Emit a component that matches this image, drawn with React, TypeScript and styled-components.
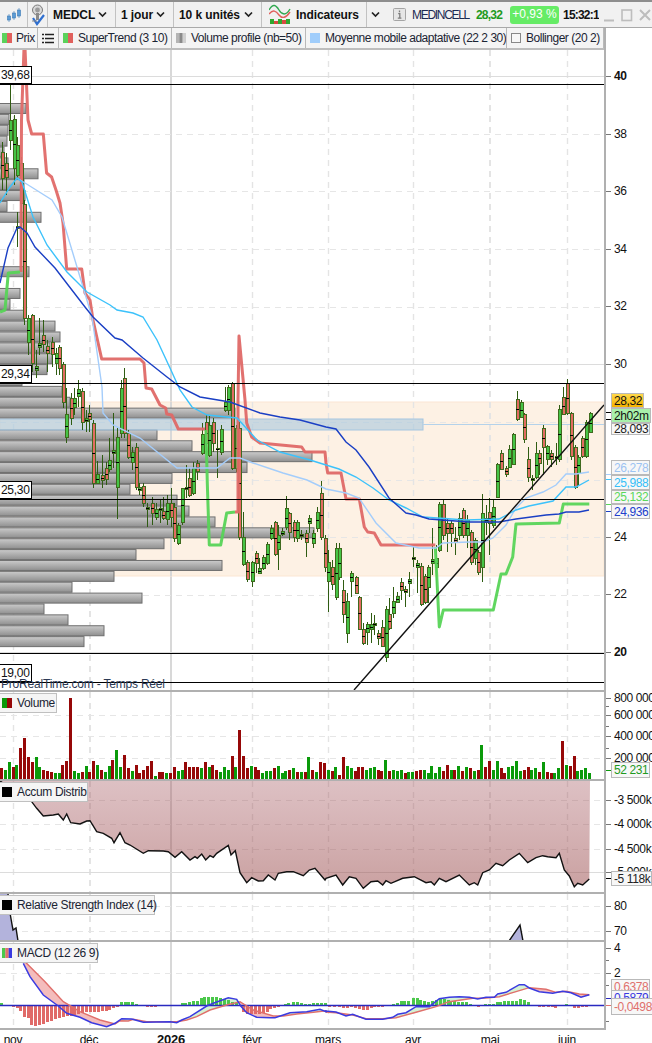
import React from 'react';
import styled, { createGlobalStyle } from 'styled-components';

const GlobalStyle = createGlobalStyle`
  html, body { margin: 0; padding: 0; background: #fff; overflow: hidden; }
  body { font-family: "Liberation Sans", Arial, sans-serif; }
`;

type Pt = [number, number];

// zoom-space points (3x crops) back to page pixels
const fromCrop = (p: Pt[], ox: number, oy: number): Pt[] => p.map(([x, y]) => [ox + x / 3, oy + y / 3]);
const line = (p: Pt[]) => p.map(([x, y]) => `${x.toFixed(1)},${y.toFixed(1)}`).join(' ');
const interp = (p: Pt[], x: number) => {
  for (let i = 1; i < p.length; i++) {
    if (x <= p[i][0]) {
      const t = (x - p[i - 1][0]) / (p[i][0] - p[i - 1][0] || 1);
      return p[i - 1][1] + (p[i][1] - p[i - 1][1]) * t;
    }
  }
  return p[p.length - 1][1];
};

const PLOT_W = 604;
const MONTHS = [13.5, 90, 252.5, 328.5, 413.5, 490, 567.5];
const YEAR_X = 171;

// x, high, body top, body bottom, low, up
const CANDLES: [number, number, number, number, number, number][] = [
  [2,142,152,178,190,0],[6,153,163,177,195,0],[10,84,120,140,150,1],[14,115,119,168,185,1],[17,137,145,175,178,1],[17,212,226,228,247,1],
  [21,157,163,203,250,0],[24,200,204,318,325,0],[28,315,318,342,355,1],[32,314,315,363,372,0],[36,350,366,370,378,1],[39,318,343,347,355,1],
  [43,320,335,344,352,0],[47,340,346,353,372,0],[52,337,342,354,367,0],[56,348,353,363,375,1],[59,345,347,368,375,0],[63,362,364,402,408,0],
  [66,388,414,437,443,1],[71,393,398,418,425,0],[74,388,398,407,415,1],[78,380,389,396,407,1],[82,388,391,422,430,0],[86,410,418,421,432,1],
  [89,405,413,419,432,0],[93,420,423,483,488,0],[97,461,474,483,484,1],[102,455,475,480,488,0],[106,462,468,479,485,0],[109,438,460,469,472,1],
  [113,413,450,453,468,1],[117,428,437,487,519,1],[121,380,388,433,438,1],[124,368,378,433,438,0],[128,430,433,457,459,0],[132,447,452,462,470,1],
  [136,443,447,487,490,0],[139,483,487,490,495,1],[143,483,486,503,507,0],[147,503,507,509,527,1],[152,497,503,513,525,0],[156,503,509,517,520,1],
  [160,500,508,510,523,1],[163,497,511,518,520,0],[167,495,503,519,525,1],[171,488,503,517,527,0],[174,503,507,538,542,0],[178,523,525,543,545,1],
  [182,488,488,522,525,1],[186,465,487,489,498,1],[189,468,478,495,497,0],[193,462,468,493,495,1],[197,460,463,471,480,0],[202,423,434,453,455,1],
  [206,415,422,443,455,0],[209,415,425,455,457,1],[213,418,422,443,452,0],[217,430,448,449,478,1],[221,425,429,452,455,1],[225,387,402,410,412,1],
  [228,385,387,410,415,1],[232,382,383,468,470,0],[236,425,428,468,472,1],[239,422,428,537,540,0],[243,512,537,564,566,1],[247,560,562,579,582,0],
  [252,561,562,581,587,1],[256,551,553,563,573,0],[259,558,568,573,574,1],[263,555,557,568,570,1],[267,542,544,563,565,1],[271,525,528,538,540,1],
  [275,521,522,554,556,0],[278,525,535,549,570,1],[282,528,531,534,536,1],[286,496,508,527,530,1],[289,512,513,532,540,0],[294,520,522,537,542,0],
  [297,520,522,538,542,1],[301,530,534,536,540,1],[306,530,533,542,557,0],[309,515,518,523,533,1],[313,530,533,543,548,1],[317,507,512,528,532,1],
  [321,481,493,537,540,0],[325,535,538,567,572,0],[328,550,562,581,612,1],[332,560,567,584,590,0],[336,543,548,597,600,1],[339,543,548,577,580,1],
  [343,580,590,614,623,0],[347,593,601,633,643,1],[351,571,573,581,597,1],[356,576,577,593,594,0],[359,596,597,629,630,0],[363,623,629,643,645,0],
  [367,622,624,632,645,1],[371,613,624,629,643,1],[374,615,623,625,635,0],[378,630,633,638,645,0],[382,620,627,646,647,0],[386,606,609,657,662,1],
  [389,598,614,628,630,0],[393,587,601,613,618,1],[397,592,596,602,603,1],[401,578,582,590,600,0],[405,586,589,592,607,0],[409,572,579,583,597,1],
  [413,547,557,559,567,1],[417,560,563,567,593,1],[421,563,566,604,606,0],[425,574,576,602,604,0],[428,565,567,587,603,1],[432,528,559,563,575,1],
  [436,545,558,567,590,1],[439,502,504,550,552,1],[443,500,504,535,540,0],[447,518,523,533,552,0],[451,520,523,533,547,0],[455,527,538,542,555,0],
  [459,513,518,535,540,1],[463,508,510,535,538,0],[467,515,520,535,548,1],[471,530,532,562,565,0],[475,538,540,558,565,1],[478,550,552,572,575,0],
  [482,494,513,567,582,1],[486,505,518,522,535,1],[489,498,512,523,555,0],[493,500,507,525,528,1],[497,463,464,497,498,1],[501,450,453,469,470,0],
  [506,466,468,474,477,0],[509,445,449,467,468,1],[513,433,434,464,465,1],[517,391,399,419,421,0],[521,400,402,417,418,1],[524,413,414,439,443,0],
  [528,447,459,477,482,0],[532,475,478,480,490,0],[536,442,453,477,479,1],[539,450,453,463,475,0],[543,425,428,447,475,0],[547,445,446,459,465,1],
  [551,450,453,459,467,0],[556,443,456,458,465,1],[559,405,409,459,462,1],[563,387,397,414,415,0],[567,379,383,413,415,0],[571,412,413,456,460,0],
  [575,445,447,487,489,0],[578,455,457,473,485,1],[582,436,438,456,458,0],[586,420,422,456,458,1],[590,412,413,432,433,1],
];

// volume profile, 50 rows from the top, index 29 is the point of control
const PROFILE = [
  26,9,8,7,4,8,38,24,25,7,41,0,0,0,0,29,0,20,10,24,55,60,50,52,47,22,62,70,235,423,157,192,312,247,172,130,177,189,215,314,164,136,222,114,72,142,44,68,104,84,
];

const ST_RED: Pt[] = [[21,272],[21.5,120],[24,48],[25,48],[28,120],[31.7,134],[43.3,134],[46.6,173],[51.6,177],[56,190],[60,203],[63,223],[66.7,269],[81.7,269],[85,293],[90,300],[93,320],[101.7,359],[140,359],[144,363],[146,388],[151.7,389],[160,405],[165.7,408],[166.7,414],[171.7,415],[178.3,429],[205,429]];
const ST_RED2: Pt[] = [[235,512],[238,512],[238,400],[239,336],[245,400],[246.7,423],[251.7,437],[260,443],[301.7,447],[305,452],[325,452],[326,463],[327.7,473],[341,473],[346,499],[359.3,499],[364.3,527],[367.7,532],[374.3,533],[381,545],[435.3,545]];
const ST_GREEN: Pt[] = [[0,312],[5,310],[8.3,273],[20,272]];
const ST_GREEN2: Pt[] = [[206,430],[207.3,483],[209.3,545],[220.7,545],[226.7,513],[235,512]];
const ST_GREEN3: Pt[] = [[435.3,547],[439.3,627],[443.3,610],[493.3,610],[501,574],[506,574],[512.7,557],[516,524],[559.3,523],[563.3,504],[589.3,504]];

const MA_DARK: Pt[] = [[0,283],[8,248],[17,228],[20,227],[27,233],[35,247],[55,268],[85,307],[93,317],[115,338],[122,340],[143,358],[167,377],[180,387],[200,397],[230,402],[260,413],[280,417],[300,420],[326,427],[336,429],[346,442],[356,450],[369,467],[389,498],[406,513],[416,515],[429,519],[469,522],[499,522],[516,519],[546,515],[559,514],[566,512],[579,512],[589,510]];
const MA_CYAN: Pt[] = [[0,203],[10,187],[17,178],[22,182],[33,217],[47,245],[67,272],[87,292],[110,305],[117,310],[133,313],[143,317],[157,340],[170,368],[180,390],[192,407],[207,415],[237,418],[257,440],[280,452],[310,460],[326,465],[339,469],[356,477],[373,488],[389,500],[406,508],[423,517],[466,520],[499,519],[516,510],[529,506],[553,501],[566,487],[576,487],[589,480]];
const MA_LIGHT: Pt[] = [[17,178],[33,188],[52,200],[62,217],[80,277],[92,317],[102,387],[103,413],[113,425],[140,438],[177,468],[217,468],[230,458],[240,458],[253,463],[283,473],[307,480],[326,489],[346,493],[359,498],[376,523],[396,543],[419,548],[436,548],[443,543],[469,542],[483,542],[493,538],[506,525],[516,508],[526,498],[543,492],[556,485],[566,474],[576,474],[589,472]];

const VOLUMES = [
  -12,10,18,-13,15,-32,-42,-23,-18,23,13,-10,-9,-8,7,7,-15,-19,-82,9,7,-8,14,-8,-19,15,-10,8,14,-20,30,13,-25,-12,9,-15,-7,-10,-14,-19,
  4,-8,-8,7,-7,-13,9,10,-18,-13,-13,-13,12,-18,13,-15,-10,8,13,10,-24,13,-50,-24,-12,14,-13,-10,7,9,9,-12,14,7,9,-10,12,-8,8,-8,23,-10,8,-18,-17,
  10,-9,13,-5,-23,14,12,-9,-13,-13,10,12,13,-10,-9,20,-9,10,9,10,-7,8,8,-9,-10,10,7,14,7,13,-9,-15,10,-10,14,-9,13,-12,9,-10,
  35,-13,-19,10,19,-12,-7,13,14,19,9,-10,-13,10,12,-8,18,-8,-7,7,12,-39,15,-14,-24,9,10,12,7,
];

const AD_CURVE: Pt[] = [
  [0, 781], [30, 801],
  ...fromCrop([[95,335],[110,355],[130,378],[160,375],[175,372],[190,390],[200,372],[212,398],[240,402],[260,393],[270,392],[290,425],[310,430],[335,445],[342,458],[360,428],[375,458],[390,465],[430,490],[445,482],[490,483],[505,485],[525,502],[545,485],[570,510],[585,500],[592,505],[605,492],[617,510],[630,497],[640,502],[650,490],[685,466],[693,495],[706,482],[720,548],[740,578],[755,563],[775,573],[790,572],[805,555],[825,570],[835,550],[860,545],[880,545],[910,557],[928,540],[945,535],[975,570]], 0, 690),
  ...fromCrop([[0,565],[30,555],[50,585],[70,560],[90,565],[112,595],[135,575],[155,573],[170,585],[180,572],[195,580],[230,565],[265,560],[300,578],[315,575],[325,585],[340,565],[360,575],[400,555],[430,585],[445,578],[455,585],[470,548],[490,540],[510,520],[530,527],[550,510],[580,490],[605,518],[630,503],[650,497],[665,500],[690,503],[700,490],[715,540],[730,558],[745,590],[755,580],[770,585],[790,567]], 326, 690),
];

const MACD_BLUE: Pt[] = [
  ...fromCrop([[70,250],[90,290],[130,345],[175,378],[200,400],[240,412],[275,428],[320,440],[345,430],[365,416],[395,417],[430,427],[510,425],[530,428],[545,420],[570,410],[620,378],[640,370],[685,353],[710,358],[722,378],[740,398],[770,412],[810,413],[825,413],[850,405],[870,398],[920,395],[960,388],[978,395]], 0, 880),
  ...fromCrop([[0,393],[30,396],[60,408],[80,403],[120,418],[170,418],[200,412],[215,403],[240,398],[270,380],[310,380],[340,356],[370,352],[400,350],[430,352],[455,357],[480,352],[505,352],[515,342],[540,337],[580,314],[595,314],[610,324],[640,335],[680,340],[710,334],[735,338],[765,352],[790,344]], 326, 880),
];
const MACD_RED: Pt[] = [
  ...fromCrop([[75,245],[135,305],[190,365],[240,395],[300,420],[345,432],[360,422],[385,423],[400,418],[440,425],[510,425],[530,425],[560,420],[590,410],[630,390],[680,375],[720,365],[760,390],[820,408],[850,408],[890,402],[940,397],[978,392]], 0, 880),
  ...fromCrop([[0,396],[30,398],[80,405],[120,416],[170,416],[210,413],[270,397],[330,380],[370,365],[440,355],[480,354],[520,350],[570,335],[610,323],[660,328],[690,337],[720,334],[760,342],[790,344]], 326, 880),
];

// histogram: [crop x, height in crop px], positive is above zero
const MACD_HIST: Pt[] = [
  ...fromCrop([[3,8],[40,-5],[50,-8],[61,-15],[72,-35],[83,-38],[94,-58],[106,-60],[117,-58],[128,-55],[140,-50],[152,-45],[164,-40],[177,-37],[188,-35],[200,-32],[212,-30],[222,-28],[235,-25],[246,-22],[258,-20],[270,-20],[282,-18],[294,-18],[305,-15],[317,-15],[328,-12],[340,-6],[352,-3],[362,10],[374,10],[385,10],[397,10],[408,5],[440,-3],[452,-3],[465,-3],[545,8],[556,8],[567,10],[579,13],[590,15],[602,22],[613,25],[625,25],[637,27],[648,25],[660,22],[672,20],[683,17],[695,12],[707,7],[718,3],[730,-20],[742,-25],[753,-25],[765,-25],[777,-25],[790,-22],[800,-20],[810,-10],[822,-7],[835,-3],[855,6],[865,7],[878,10],[890,10],[902,8],[915,6],[927,5],[940,8],[950,8],[962,8],[975,8]], 0, 0),
  ...fromCrop([[10,-3],[25,-3],[38,-3],[50,-7],[63,-6],[75,-5],[88,-8],[100,-10],[110,-12],[122,-12],[135,-8],[145,-5],[157,-5],[167,-3],[200,5],[212,8],[225,13],[235,13],[247,15],[260,22],[272,22],[283,17],[295,15],[305,12],[318,15],[330,18],[342,22],[353,20],[365,18],[373,15],[385,13],[397,12],[408,12],[420,10],[433,5],[457,-3],[478,5],[490,5],[500,5],[512,12],[523,12],[535,13],[547,14],[558,15],[570,15],[582,20],[593,17],[605,10],[640,-3],[652,-3],[665,-3],[677,-3],[688,-7],[721,6],[745,-6],[757,-6],[767,-4],[780,-4]], 326, 0),
];

const Screen = styled.div`
  width: 652px;
  height: 1043px;
  overflow: hidden;
  display: flex;
  flex-direction: column;
  background: #fff;
  color: #111;
  font-size: 12px;
`;

const TopBar = styled.div`
  height: 25px;
  flex: none;
  display: flex;
  align-items: stretch;
  background: #f1f1f1;
  border-top: 2px solid #8e8e8e;
  border-bottom: 1px solid #a9a9a9;
`;

const ToolCell = styled.div<{ $w: number }>`
  width: ${p => p.$w}px;
  flex: none;
  box-sizing: border-box;
  display: flex;
  align-items: center;
  justify-content: space-between;
  padding: 0 8px 0 5px;
  border-right: 1px solid #c2c2c2;
  font-weight: 700;
  font-size: 12px;
  letter-spacing: -0.1px;
  color: #111;
  white-space: nowrap;
`;

const IconCell = styled(ToolCell)`
  justify-content: center;
  padding: 0;
`;

const IndicatorCell = styled(ToolCell)`
  justify-content: flex-start;
  gap: 5px;
  padding: 0 0 0 7px;
`;

const ArrowCell = styled.div`
  width: 24px;
  flex: none;
  display: flex;
  align-items: center;
  padding-left: 4px;
  box-sizing: border-box;
`;

const Quote = styled.div`
  flex: 1;
  display: flex;
  align-items: center;
  padding-left: 2px;
`;

const Name = styled.span`
  margin-left: 6px;
  font-size: 12px;
  letter-spacing: -1.3px;
  color: #1c2a52;
`;

const LastPrice = styled.span`
  margin-left: 7px;
  font-size: 12px;
  font-weight: 700;
  letter-spacing: -0.8px;
  color: #1f9a1f;
`;

const ChangePill = styled.span`
  margin-left: 8px;
  width: 49px;
  height: 18px;
  border-radius: 3px;
  background: #66ec66;
  color: #fff;
  font-size: 12px;
  line-height: 17px;
  text-align: center;
  flex: none;
`;

const Clock = styled.span`
  margin-left: 4px;
  font-size: 12px;
  font-weight: 700;
  letter-spacing: -0.8px;
  width: 36px;
  overflow: hidden;
  flex: none;
`;

const WindowButtons = styled.div`
  margin-left: 5px;
  display: flex;
  flex: none;
`;

const Pane = styled.div<{ $h: number }>`
  height: ${p => p.$h}px;
  flex: none;
  display: flex;
`;

const Plot = styled.div`
  width: ${PLOT_W}px;
  flex: none;
  box-sizing: border-box;
  position: relative;
  overflow: hidden;
  display: flex;
  flex-direction: column;
  border-bottom: 2px solid #b0b0b0;
`;

const PlotSvg = styled.svg`
  display: block;
  width: ${PLOT_W}px;
  flex: 1;
  min-height: 0;
`;

const Axis = styled.div`
  flex: 1;
  position: relative;
  overflow: hidden;
  border-left: 2px solid #b0b0b0;
`;

const AxisSvg = styled.svg`
  display: block;
  width: 100%;
  height: 100%;
`;

const AxisText = styled.text<{ $bold?: boolean }>`
  font-size: 12px;
  font-weight: ${p => (p.$bold ? 700 : 400)};
  letter-spacing: -0.4px;
  fill: #111;
  dominant-baseline: central;
`;

const ValueTag = styled.span<{ $y: number; $h?: number; $color: string; $bg?: string }>`
  position: absolute;
  left: 5px;
  top: ${p => p.$y}px;
  height: ${p => p.$h ?? 15}px;
  line-height: ${p => (p.$h ?? 15) - 1}px;
  box-sizing: border-box;
  padding: 0 1px 0 2px;
  font-size: 12px;
  letter-spacing: -0.4px;
  white-space: nowrap;
  border: 1px solid #b9b9b9;
  background: ${p => p.$bg ?? '#f7f7f7'};
  color: ${p => p.$color};
`;

const LegendBar = styled.div`
  width: ${PLOT_W}px;
  height: 22px;
  flex: none;
  box-sizing: border-box;
  display: flex;
  background: #f4f4f4;
  border-bottom: 2px solid #bdbdbd;
  color: #1b2433;
  font-size: 12px;
  letter-spacing: -0.48px;
`;

const LegendItem = styled.div<{ $w: number }>`
  width: ${p => p.$w}px;
  flex: none;
  box-sizing: border-box;
  display: flex;
  align-items: center;
  gap: 5px;
  padding-left: 4px;
  border-right: 1px solid #b9b9b9;
  white-space: nowrap;
  overflow: hidden;
`;

const FirstLegendItem = styled(LegendItem)`
  padding-left: 2px;
  gap: 4px;
`;

const ListItem = styled(LegendItem)`
  justify-content: center;
  padding: 0;
`;

const Swatch = styled.span<{ $bg: string; $border?: string }>`
  width: 10px;
  height: 10px;
  flex: none;
  box-sizing: border-box;
  background: ${p => p.$bg};
  border: ${p => (p.$border ? `1px solid ${p.$border}` : 'none')};
`;

const PaneLegend = styled.div<{ $w: number }>`
  position: absolute;
  left: -1px;
  top: 1px;
  width: ${p => p.$w}px;
  height: 20px;
  box-sizing: border-box;
  display: flex;
  align-items: center;
  gap: 5px;
  padding-left: 2px;
  background: #f5f5f5;
  border: 1px solid #c0c0c0;
  color: #1b2433;
  font-size: 12px;
  letter-spacing: -0.35px;
  white-space: nowrap;
`;

const PriceTagBox = styled.div<{ $y: number }>`
  position: absolute;
  left: -1px;
  top: ${p => p.$y}px;
  height: 18px;
  width: 33px;
  box-sizing: border-box;
  padding-left: 1px;
  background: #fff;
  border: 1px solid #000;
  font-size: 12px;
  line-height: 16px;
  letter-spacing: -0.3px;
  color: #111;
`;

const Watermark = styled.div`
  position: absolute;
  left: 1px;
  top: 649px;
  font-size: 12px;
  line-height: 14px;
  letter-spacing: -0.2px;
  color: #2c3a55;
  white-space: nowrap;
`;

const DateRow = styled.svg`
  display: block;
  width: 652px;
  flex: 1;
  min-height: 0;
`;

const DateText = styled.text<{ $bold?: boolean }>`
  font-size: ${p => (p.$bold ? 13 : 12)}px;
  font-weight: ${p => (p.$bold ? 700 : 400)};
  letter-spacing: -0.2px;
  text-anchor: middle;
  fill: #111;
`;

const CandleIcon = () => (
  <svg width="16" height="16" viewBox="0 0 16 16">
    <g fill="#5b9bd5" stroke="#3a78b5" strokeWidth="0.6">
      <path d="M3 7v8M8 4v9M13 1v10" fill="none" />
      <rect x="1.5" y="9" width="3" height="4" />
      <rect x="6.5" y="6" width="3" height="5" />
      <rect x="11.5" y="3" width="3" height="6" />
    </g>
  </svg>
);

const AlertIcon = () => (
  <svg width="14" height="22" viewBox="0 0 14 22">
    <circle cx="6.5" cy="6" r="5" fill="#d8d8d8" stroke="#7a7a7a" />
    <circle cx="6.5" cy="6" r="2.4" fill="#9a9a9a" />
    <path d="M5 9h3v7H5z" fill="#8a8a8a" />
    <path d="M2 14l4 6 7-9" fill="none" stroke="#2f6fd0" strokeWidth="2.2" />
    <path d="M1 17h5" stroke="#888" />
  </svg>
);

const Chevron = () => (
  <svg width="9" height="7" viewBox="0 0 9 7">
    <path d="M1 1.5l3.5 3.5L8 1.5" fill="none" stroke="#222" strokeWidth="1.7" />
  </svg>
);

const IndicatorIcon = () => (
  <svg width="22" height="21" viewBox="0 0 22 21">
    <path d="M0 6c4-7 7-5 10 0s7 6 11-1" fill="none" stroke="#2fa84f" strokeWidth="1.4" />
    <path d="M0 10c4-5 7-3 10 1s7 3 11-3" fill="none" stroke="#e0605c" strokeWidth="1.4" />
    <path d="M1 15h4v5H1z" fill="#2fa82f" />
    <path d="M5 17h4v3H5z" fill="#d84a40" />
    <path d="M9 15h4v5H9z" fill="#2fa82f" />
    <path d="M13 16h4v4h-4z" fill="#d84a40" />
    <path d="M17 15h4v5h-4z" fill="#2fa82f" />
  </svg>
);

const InfoIcon = () => (
  <svg width="13" height="13" viewBox="0 0 13 13">
    <rect x="0.5" y="0.5" width="12" height="12" rx="1" fill="#e6e6e6" stroke="#a5a5a5" />
    <path d="M6.5 2.6v1.6M5.2 5.6h1.6v4.4M4.8 10.2h3.6" fill="none" stroke="#7c7c7c" strokeWidth="1.3" />
  </svg>
);

const WindowIcons = () => (
  <svg width="48" height="14" viewBox="0 0 48 14">
    <path d="M0 12.5h10" stroke="#bdbdbd" strokeWidth="2" />
    <rect x="18" y="2" width="9.5" height="10.5" fill="none" stroke="#bdbdbd" strokeWidth="1.6" />
    <path d="M36 2l10 10M46 2L36 12" stroke="#bdbdbd" strokeWidth="2" />
  </svg>
);

const ListIcon = () => (
  <svg width="12" height="11" viewBox="0 0 12 11">
    <path d="M3 1.5h9M3 5.5h9M3 9.5h9M0 1.5h2M0 5.5h2M0 9.5h2" stroke="#222" strokeWidth="1.6" />
  </svg>
);

const StripeSwatch = ({ colors }: { colors: string[] }) => (
  <svg width="10" height="10" viewBox={`0 0 ${colors.length} 1`} preserveAspectRatio="none" style={{ flex: 'none' }}>
    {colors.map((c, i) => (
      <rect key={c + i} x={i} y="0" width="1.02" height="1" fill={c} />
    ))}
  </svg>
);

// labels and ticks of one price scale, y in page pixels
type Tick = { y: number; text?: string; bold?: boolean; color?: string };
const Scale = ({ top, ticks }: { top: number; ticks: Tick[] }) => (
  <AxisSvg>
    {ticks.map(t => (
      <g key={t.y}>
        <line x1="0" x2={t.text ? 5 : t.color ? 5 : 3} y1={t.y - top + 0.5} y2={t.y - top + 0.5} stroke={t.color ?? '#777'} />
        {t.text && <AxisText x="8" y={t.y - top} $bold={t.bold}>{t.text}</AxisText>}
      </g>
    ))}
  </AxisSvg>
);

// shared vertical month grid
const VGrid = ({ top, bottom }: { top: number; bottom: number }) => (
  <g>
    {MONTHS.map((x, i) => (
      <line key={x} x1={x} x2={x} y1={top} y2={bottom} stroke="#e4e4e4" strokeWidth={i === 1 || i === 5 ? 2 : 1.4} strokeDasharray="6 5" />
    ))}
    <line x1={YEAR_X} x2={YEAR_X} y1={top} y2={bottom} stroke="#d8d8d8" strokeWidth="2" />
  </g>
);

const HGrid = ({ ys, solid = [] }: { ys: number[]; solid?: number[] }) => (
  <g>
    {ys.map(y => (
      <line key={y} x1="0" x2={PLOT_W} y1={y + 0.5} y2={y + 0.5} stroke="#e6e6e6" strokeWidth="1" strokeDasharray="6 5" />
    ))}
    {solid.map(y => (
      <line key={y} x1="0" x2={PLOT_W} y1={y + 0.5} y2={y + 0.5} stroke="#dcdcdc" strokeWidth="1" />
    ))}
  </g>
);

const Candles = () => (
  <g shapeRendering="crispEdges">
    {CANDLES.map(([x, hi, top, bottom, lo, up], i) => (
      <g key={i}>
        <line x1={x + 0.5} x2={x + 0.5} y1={hi} y2={lo} stroke="#2f5c12" />
        <rect x={x - 1} y={top} width={3} height={bottom - top} fill={up ? '#46c446' : '#e26c62'} stroke="#3f6a1e" />
        <line x1={x - 1} x2={x + 2} y1={Math.round((top + bottom) / 2) + 0.5} y2={Math.round((top + bottom) / 2) + 0.5} stroke="#000" />
      </g>
    ))}
  </g>
);

const MainChart = () => (
  <PlotSvg viewBox={`0 50 ${PLOT_W} 640`} preserveAspectRatio="none">
    <defs>
      <linearGradient id="bar" x1="0" x2="0" y1="0" y2="1">
        <stop offset="0" stopColor="#cbcbcb" />
        <stop offset="1" stopColor="#8f8f8f" />
      </linearGradient>
    </defs>
    <VGrid top={50} bottom={690} />
    <HGrid ys={[134, 191, 249, 307, 422, 480, 537, 595]} solid={[76, 364, 652]} />
    <rect x="0" y="402" width={PLOT_W} height="174" fill="#fdf1e4" stroke="#fbe6d3" />
    <VGrid top={402} bottom={576} />
    <HGrid ys={[422, 480, 537]} />
    {PROFILE.map((w, i) =>
      w === 0 || i === 29 ? null : (
        <rect key={i} x="-2" y={103.5 + i * 10.88} width={w + 2} height="10" fill="url(#bar)" stroke="#6f6f6f" />
      ),
    )}
    <rect x="-2" y="419" width="425" height="11" fill="#a9c8de" fillOpacity="0.6" stroke="#a5c6e0" />
    <line x1="423" x2={PLOT_W} y1="424.5" y2="424.5" stroke="#b4d2ea" />
    <Candles />
    <g fill="none" strokeWidth="3" strokeLinejoin="round" opacity="0.95">
      <polyline points={line(ST_RED)} stroke="#e06a68" />
      <polyline points={line(ST_RED2)} stroke="#e06a68" />
      <polyline points={line(ST_GREEN)} stroke="#58d458" />
      <polyline points={line(ST_GREEN2)} stroke="#58d458" />
      <polyline points={line(ST_GREEN3)} stroke="#58d458" />
    </g>
    <g fill="none" strokeWidth="1.4">
      <polyline points={line(MA_LIGHT)} stroke="#a4cdfb" />
      <polyline points={line(MA_CYAN)} stroke="#3cc2fb" />
      <polyline points={line(MA_DARK)} stroke="#1a3fc4" />
    </g>
    <line x1="354" y1="690" x2="604" y2="405" stroke="#111" strokeWidth="1.4" />
    {[84, 383, 499, 653, 682].map(y => (
      <line key={y} x1="0" x2={PLOT_W} y1={y + 0.5} y2={y + 0.5} stroke="#000" shapeRendering="crispEdges" />
    ))}
  </PlotSvg>
);

const VolumeChart = () => (
  <PlotSvg viewBox={`0 692 ${PLOT_W} 87`} preserveAspectRatio="none">
    <VGrid top={692} bottom={780} />
    <HGrid ys={[715, 736, 758]} />
    <g shapeRendering="crispEdges">
      {VOLUMES.map((v, i) => {
        const x = i * (588 / (VOLUMES.length - 1));
        const h = Math.abs(v);
        return <rect key={i} x={x} y={780 - h} width={3} height={h} fill={v > 0 ? '#0a9a0a' : '#960808'} />;
      })}
    </g>
  </PlotSvg>
);

const AccumChart = () => {
  const area = line([[0, 781], ...AD_CURVE, [590, 781]]);
  return (
    <PlotSvg viewBox={`0 781 ${PLOT_W} 111`} preserveAspectRatio="none">
      <defs>
        <linearGradient id="ad" x1="0" x2="0" y1="0" y2="1">
          <stop offset="0" stopColor="#a65a62" stopOpacity="0.38" />
          <stop offset="1" stopColor="#994a4a" stopOpacity="0.52" />
        </linearGradient>
      </defs>
      <VGrid top={781} bottom={892} />
      <HGrid ys={[800, 824, 849]} solid={[872]} />
      <polygon points={area} fill="url(#ad)" />
      <polyline points={line(AD_CURVE)} fill="none" stroke="#111" strokeWidth="1.4" />
    </PlotSvg>
  );
};

const RsiChart = () => (
  <PlotSvg viewBox={`0 894 ${PLOT_W} 46`} preserveAspectRatio="none">
    <VGrid top={894} bottom={940} />
    <HGrid ys={[906, 931]} />
    <polygon points="0,894 8,894 10,913 13,930 16,928 18,941 0,941" fill="#b3b3dc" />
    <polyline points="8,894 10,913 13,930 16,928 18,941" fill="none" stroke="#111" strokeWidth="1.4" />
    <polygon points="509,941 520,925 523,941" fill="#b3b3dc" stroke="#111" strokeWidth="1.4" />
  </PlotSvg>
);

const MacdChart = () => {
  const zero = 1005.5;
  const slices: React.ReactNode[] = [];
  for (let x = 24; x < 590; x++) {
    const b = interp(MACD_BLUE, x);
    const r = interp(MACD_RED, x);
    slices.push(
      <rect key={x} x={x} y={Math.min(b, r)} width="1.05" height={Math.abs(b - r)} fill={b > r ? '#f4bcbc' : '#d4f2d4'} />,
    );
  }
  return (
    <PlotSvg viewBox={`0 942 ${PLOT_W} 86`} preserveAspectRatio="none">
      <VGrid top={942} bottom={1028} />
      <HGrid ys={[973]} />
      {slices}
      <g shapeRendering="crispEdges">
        {MACD_HIST.map(([x, h]) => (
          <rect key={x} x={x - 1} y={h > 0 ? zero - h : zero} width={3} height={Math.abs(h)} fill={h > 0 ? '#4bc84b' : '#e06a68'} />
        ))}
      </g>
      <line x1="0" x2={PLOT_W} y1={zero} y2={zero} stroke="#2a2ac0" strokeWidth="1.4" />
      <polyline points={line(MACD_RED)} fill="none" stroke="#e0706c" strokeWidth="1.4" />
      <polyline points={line(MACD_BLUE)} fill="none" stroke="#3a3ae0" strokeWidth="1.5" />
    </PlotSvg>
  );
};

const PRICE_TICKS: Tick[] = [
  ...[40, 38, 36, 34, 32, 30, 24, 22, 20].map(v => ({
    y: Math.round(76 + (40 - v) * 28.8),
    text: String(v),
    bold: v === 40 || v === 20,
  })),
  { y: 412, color: '#000' },
  { y: 419, color: '#000' },
  { y: 474, color: '#a4cdfb' },
  { y: 479, color: '#3cc2fb' },
  { y: 504, color: '#58d458' },
  { y: 511, color: '#1a3fc4' },
];

const DATES: [number, string, boolean?][] = [
  [13, 'nov'], [89, 'déc'], [171, '2026', true], [252, 'févr'], [328, 'mars'], [413, 'avr'], [490, 'mai'], [567, 'juin'],
];

export default function App() {
  return (
    <Screen>
      <GlobalStyle />
      <TopBar>
        <IconCell $w={28}><CandleIcon /></IconCell>
        <IconCell $w={20}><AlertIcon /></IconCell>
        <ToolCell $w={68}>MEDCL<Chevron /></ToolCell>
        <ToolCell $w={58}>1 jour<Chevron /></ToolCell>
        <ToolCell $w={88}>10 k unités<Chevron /></ToolCell>
        <IndicatorCell $w={105}><IndicatorIcon />Indicateurs</IndicatorCell>
        <ArrowCell><Chevron /></ArrowCell>
        <Quote>
          <InfoIcon />
          <Name>MEDINCELL</Name>
          <LastPrice>28,32</LastPrice>
          <ChangePill>+0,93 %</ChangePill>
          <Clock>15:32:1</Clock>
          <WindowButtons><WindowIcons /></WindowButtons>
        </Quote>
      </TopBar>

      <Pane $h={664}>
        <Plot>
          <LegendBar>
            <FirstLegendItem $w={38}><StripeSwatch colors={['#5ad25a', '#e0605c']} />Prix</FirstLegendItem>
            <ListItem $w={21}><ListIcon /></ListItem>
            <LegendItem $w={113}><StripeSwatch colors={['#5ad25a', '#e0605c']} />SuperTrend (3 10)</LegendItem>
            <LegendItem $w={134}><StripeSwatch colors={['#b5b5b5', '#8a8a8a', '#d0d0d0']} />Volume profile (nb=50)</LegendItem>
            <LegendItem $w={201}><Swatch $bg="#a0cdfb" />Moyenne mobile adaptative (22 2 30)</LegendItem>
            <LegendItem $w={97}><Swatch $bg="#f7f7f7" $border="#888" />Bollinger (20 2)</LegendItem>
          </LegendBar>
          <MainChart />
          <PriceTagBox $y={38}>39,68</PriceTagBox>
          <PriceTagBox $y={337}>29,34</PriceTagBox>
          <PriceTagBox $y={453}>25,30</PriceTagBox>
          <PriceTagBox $y={636}>19,00</PriceTagBox>
          <Watermark>ProRealTime.com - Temps Réel</Watermark>
        </Plot>
        <Axis>
          <Scale top={28} ticks={PRICE_TICKS} />
          <ValueTag $y={395} $h={12} $color="#222">28,093</ValueTag>
          <ValueTag $y={365} $color="#111" $bg="linear-gradient(#ffd84a, #f5b300)">28,32</ValueTag>
          <ValueTag $y={380} $color="#111" $bg="#a8f0aa">2h02m</ValueTag>
          <ValueTag $y={432} $color="#9cc3f2">26,278</ValueTag>
          <ValueTag $y={447} $color="#35bff8">25,988</ValueTag>
          <ValueTag $y={462} $h={14} $color="#5ad85a">25,132</ValueTag>
          <ValueTag $y={476} $color="#2040cc">24,936</ValueTag>
        </Axis>
      </Pane>

      <Pane $h={89}>
        <Plot>
          <VolumeChart />
          <PaneLegend $w={58}><StripeSwatch colors={['#0a9a0a', '#960808']} />Volume</PaneLegend>
        </Plot>
        <Axis>
          <Scale
            top={692}
            ticks={[
              { y: 698, text: '800 000' },
              { y: 706 },
              { y: 715, text: '600 000' },
              { y: 726 },
              { y: 736, text: '400 000' },
              { y: 748 },
              { y: 758, text: '200 000' },
              { y: 770, color: '#0a9a0a' },
            ]}
          />
          <ValueTag $y={70} $h={16} $color="#1f9a1f">52 231</ValueTag>
        </Axis>
      </Pane>

      <Pane $h={113}>
        <Plot>
          <AccumChart />
          <PaneLegend $w={89}><Swatch $bg="#000" />Accum Distrib</PaneLegend>
        </Plot>
        <Axis>
          <Scale
            top={781}
            ticks={[
              { y: 800, text: '-3 500k' },
              { y: 824, text: '-4 000k' },
              { y: 849, text: '-4 500k' },
              { y: 872, text: '-5 000k' },
              { y: 878, color: '#000' },
            ]}
          />
          <ValueTag $y={90} $color="#222">-5 118k</ValueTag>
        </Axis>
      </Pane>

      <Pane $h={48}>
        <Plot>
          <RsiChart />
          <PaneLegend $w={156}><Swatch $bg="#000" />Relative Strength Index (14)</PaneLegend>
        </Plot>
        <Axis>
          <Scale top={894} ticks={[{ y: 906, text: '80' }, { y: 931, text: '70' }]} />
        </Axis>
      </Pane>

      <Pane $h={88}>
        <Plot>
          <MacdChart />
          <PaneLegend $w={99}><StripeSwatch colors={['#4bc84b', '#e0706c', '#3a3ae0']} />MACD (12 26 9)</PaneLegend>
        </Plot>
        <Axis>
          <Scale
            top={942}
            ticks={[
              { y: 948, text: '4' },
              { y: 960 },
              { y: 973, text: '2' },
              { y: 985 },
              { y: 998, color: '#2a2ac0' },
              { y: 1005, color: '#e0706c' },
              { y: 1021 },
            ]}
          />
          <ValueTag $y={37} $color="#e0706c">0,6378</ValueTag>
          <ValueTag $y={48} $color="#3a3ae0">0,5879</ValueTag>
          <ValueTag $y={56} $h={17} $color="#e0706c">-0,0498</ValueTag>
        </Axis>
      </Pane>

      <DateRow>
        {DATES.map(([x, label, bold]) => (
          <DateText key={label} x={x} y="14" $bold={bold}>{label}</DateText>
        ))}
      </DateRow>
    </Screen>
  );
}
